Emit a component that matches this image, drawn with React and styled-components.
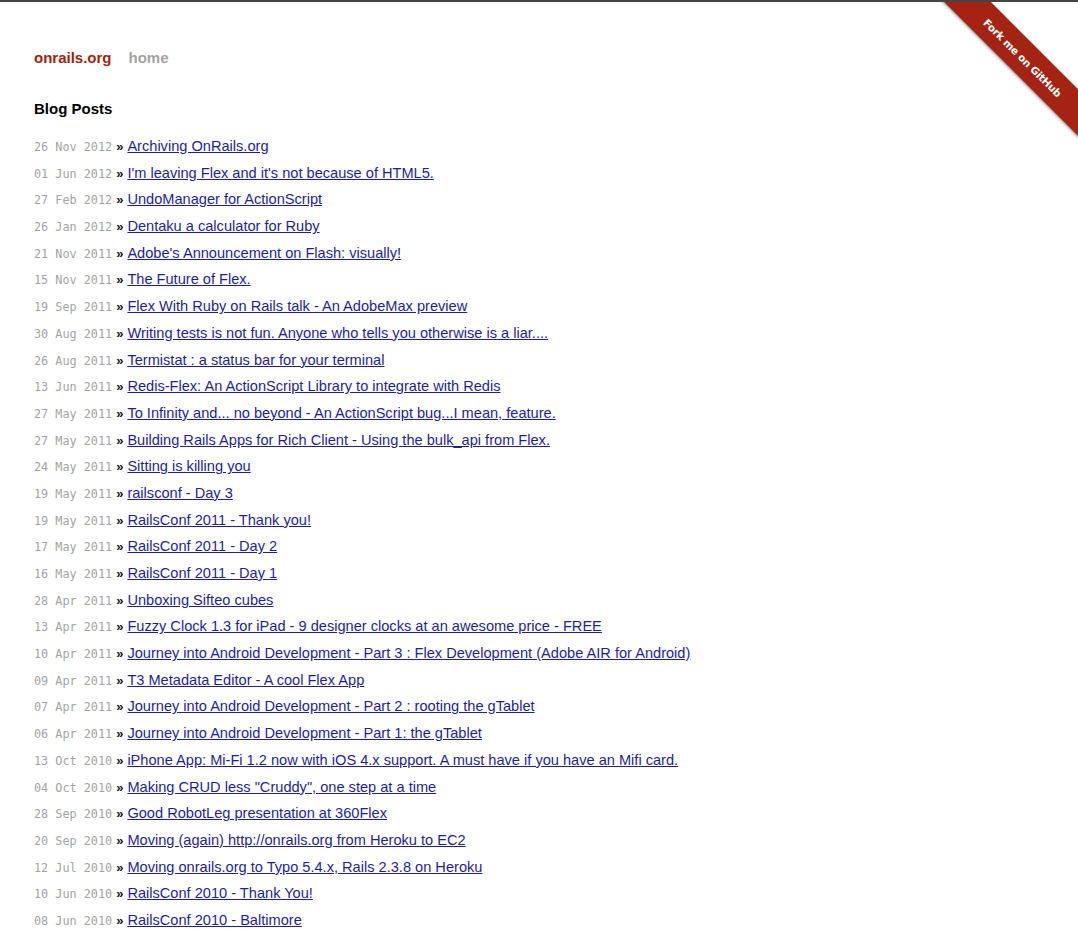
import React from "react";
import styled, { createGlobalStyle } from "styled-components";

const posts = [
  ["26 Nov 2012", "Archiving OnRails.org"],
  ["01 Jun 2012", "I'm leaving Flex and it's not because of HTML5."],
  ["27 Feb 2012", "UndoManager for ActionScript"],
  ["26 Jan 2012", "Dentaku a calculator for Ruby"],
  ["21 Nov 2011", "Adobe's Announcement on Flash: visually!"],
  ["15 Nov 2011", "The Future of Flex."],
  ["19 Sep 2011", "Flex With Ruby on Rails talk - An AdobeMax preview"],
  ["30 Aug 2011", "Writing tests is not fun. Anyone who tells you otherwise is a liar...."],
  ["26 Aug 2011", "Termistat : a status bar for your terminal"],
  ["13 Jun 2011", "Redis-Flex: An ActionScript Library to integrate with Redis"],
  ["27 May 2011", "To Infinity and... no beyond - An ActionScript bug...I mean, feature."],
  ["27 May 2011", "Building Rails Apps for Rich Client - Using the bulk_api from Flex."],
  ["24 May 2011", "Sitting is killing you"],
  ["19 May 2011", "railsconf - Day 3"],
  ["19 May 2011", "RailsConf 2011 - Thank you!"],
  ["17 May 2011", "RailsConf 2011 - Day 2"],
  ["16 May 2011", "RailsConf 2011 - Day 1"],
  ["28 Apr 2011", "Unboxing Sifteo cubes"],
  ["13 Apr 2011", "Fuzzy Clock 1.3 for iPad - 9 designer clocks at an awesome price - FREE"],
  ["10 Apr 2011", "Journey into Android Development - Part 3 : Flex Development (Adobe AIR for Android)"],
  ["09 Apr 2011", "T3 Metadata Editor - A cool Flex App"],
  ["07 Apr 2011", "Journey into Android Development - Part 2 : rooting the gTablet"],
  ["06 Apr 2011", "Journey into Android Development - Part 1: the gTablet"],
  ["13 Oct 2010", "iPhone App: Mi-Fi 1.2 now with iOS 4.x support. A must have if you have an Mifi card."],
  ["04 Oct 2010", "Making CRUD less \"Cruddy\", one step at a time"],
  ["28 Sep 2010", "Good RobotLeg presentation at 360Flex"],
  ["20 Sep 2010", "Moving (again) http://onrails.org from Heroku to EC2"],
  ["12 Jul 2010", "Moving onrails.org to Typo 5.4.x, Rails 2.3.8 on Heroku"],
  ["10 Jun 2010", "RailsConf 2010 - Thank You!"],
  ["08 Jun 2010", "RailsConf 2010 - Baltimore"],
];

const GlobalStyle = createGlobalStyle`
  html, body {
    margin: 0;
    padding: 0;
    background: #fff;
  }
  body {
    font-family: "Liberation Sans", Arial, Helvetica, sans-serif;
    border-top: 2px solid #444;
    overflow: hidden;
  }
`;

const Page = styled.div`
  position: relative;
  padding: 44px 34px 0;
`;

const Nav = styled.nav`
  display: flex;
  gap: 17px;
  font-size: 15px;
  font-weight: bold;
  line-height: 24px;
`;

const NavLink = styled.a`
  color: ${(p) => (p.brand ? "#a41f10" : "#a3a3a3")};
  text-decoration: none;
`;

const Heading = styled.h2`
  margin: 27px 0 12px;
  font-size: 15px;
  font-weight: bold;
  line-height: 24px;
  color: #000;
`;

const List = styled.ul`
  list-style: none;
  margin: 0;
  padding: 0;
`;

const Row = styled.li`
  height: 26.7px;
  line-height: 26.7px;
  white-space: nowrap;
  font-size: 14.6px;
`;

const Date = styled.span`
  font-family: "DejaVu Sans Mono", "Liberation Mono", monospace;
  font-size: 11.8px;
  color: #a3a3a3;
`;

const Sep = styled.span`
  font-weight: bold;
  font-size: 13px;
  color: #111;
  margin: 0 4px;
`;

const PostLink = styled.a`
  color: #1d1da6;
  text-decoration: underline;
`;

const RibbonClip = styled.div`
  position: absolute;
  top: 0;
  right: 0;
  width: 150px;
  height: 150px;
  overflow: hidden;
  pointer-events: none;
`;

const Ribbon = styled.a`
  position: absolute;
  left: -16px;
  top: 39px;
  width: 222px;
  height: 33px;
  transform: rotate(45deg);
  background: #a52312;
  box-shadow: 0 1px 3px rgba(0, 0, 0, 0.45);
  display: flex;
  align-items: center;
  justify-content: center;
  color: #fff;
  font-family: "DejaVu Sans", Verdana, sans-serif;
  font-size: 10.3px;
  font-weight: bold;
  letter-spacing: -0.2px;
  text-decoration: none;
  pointer-events: auto;
`;

export default function App() {
  return (
    <>
      <GlobalStyle />
      <Page>
        <RibbonClip>
          <Ribbon href="#">Fork me on GitHub</Ribbon>
        </RibbonClip>
        <Nav>
          <NavLink brand href="#">onrails.org</NavLink>
          <NavLink href="#">home</NavLink>
        </Nav>
        <Heading>Blog Posts</Heading>
        <List>
          {posts.map(([date, title], i) => (
            <Row key={i}>
              <Date>{date}</Date>
              <Sep>»</Sep>
              <PostLink href="#">{title}</PostLink>
            </Row>
          ))}
        </List>
      </Page>
    </>
  );
}
